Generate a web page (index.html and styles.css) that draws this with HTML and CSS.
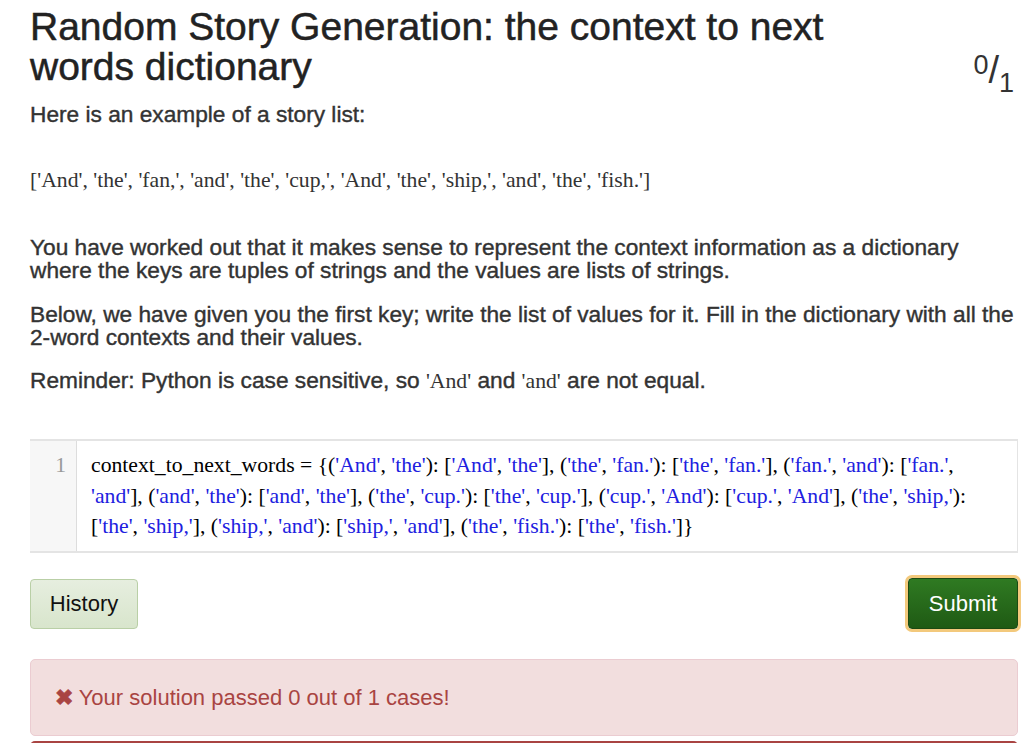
FILE: index.html
```html
<!DOCTYPE html>
<html lang="en">
<head>
  <meta charset="UTF-8">
  <title>Random Story Generation</title>
  <link rel="stylesheet" href="styles.css">
</head>
<body>
  <div class="page">
    <div class="problem-head">
      <h1 class="problem-title">Random Story Generation: the context to next words dictionary</h1>
      <div class="score"><sup>0</sup>/<sub>1</sub></div>
    </div>
    <p class="lead">Here is an example of a story list:</p>
    <pre class="story">['And', 'the', 'fan,', 'and', 'the', 'cup,', 'And', 'the', 'ship,', 'and', 'the', 'fish.']</pre>
    <p class="text">You have worked out that it makes sense to represent the context information as a dictionary where the keys are tuples of strings and the values are lists of strings.</p>
    <p class="text">Below, we have given you the first key; write the list of values for it. Fill in the dictionary with all the 2-word contexts and their values.</p>
    <p class="text">Reminder: Python is case sensitive, so <span class="serif">'And'</span> and <span class="serif">'and'</span> are not equal.</p>

    <div class="editor">
      <div class="gutter">1</div>
      <div class="code">context_to_next_words = {(<span class="s">'And'</span>, <span class="s">'the'</span>): [<span class="s">'And'</span>, <span class="s">'the'</span>], (<span class="s">'the'</span>, <span class="s">'fan.'</span>): [<span class="s">'the'</span>, <span class="s">'fan.'</span>], (<span class="s">'fan.'</span>, <span class="s">'and'</span>): [<span class="s">'fan.'</span>, <span class="s">'and'</span>], (<span class="s">'and'</span>, <span class="s">'the'</span>): [<span class="s">'and'</span>, <span class="s">'the'</span>], (<span class="s">'the'</span>, <span class="s">'cup.'</span>): [<span class="s">'the'</span>, <span class="s">'cup.'</span>], (<span class="s">'cup.'</span>, <span class="s">'And'</span>): [<span class="s">'cup.'</span>, <span class="s">'And'</span>], (<span class="s">'the'</span>, <span class="s">'ship,'</span>): [<span class="s">'the'</span>, <span class="s">'ship,'</span>], (<span class="s">'ship,'</span>, <span class="s">'and'</span>): [<span class="s">'ship,'</span>, <span class="s">'and'</span>], (<span class="s">'the'</span>, <span class="s">'fish.'</span>): [<span class="s">'the'</span>, <span class="s">'fish.'</span>]}</div>
    </div>

    <div class="actions">
      <button class="btn btn-history">History</button>
      <button class="btn btn-submit">Submit</button>
    </div>

    <div class="alert">
      <span class="alert-icon">&#10006;</span> Your solution passed 0 out of 1 cases!
    </div>
    <div class="next-bar"></div>
  </div>
</body>
</html>
```

FILE: styles.css
```css
* {
  margin: 0;
  padding: 0;
  box-sizing: border-box;
}
body {
  background: #fff;
  color: #333;
  font-family: "Liberation Sans", Arial, sans-serif;
  font-size: 22.7px;
  overflow: hidden;
}
.page {
  padding: 7px 6px 0 30px;
}
.problem-head {
  display: flex;
  justify-content: space-between;
  align-items: flex-start;
}
.problem-title {
  width: 850px;
  font-size: 39px;
  font-weight: normal;
  line-height: 40px;
  color: #222;
  -webkit-text-stroke: 0.5px #222;
}
.score {
  margin-top: 38px;
  margin-right: 4px;
  font-size: 38px;
  color: #333;
  line-height: 40px;
}
.score sup, .score sub {
  font-size: 27px;
}
.score sup {
  vertical-align: 9px;
}
.score sub {
  vertical-align: -9px;
}
.lead, .text {
  line-height: 23px;
  -webkit-text-stroke: 0.4px #333;
}
.story {
  margin-top: 43px;
  font-family: "Liberation Serif", "Times New Roman", serif;
  font-size: 21.7px;
  line-height: 23px;
  color: #333;
}
.text {
  margin-top: 44px;
}
.text + .text {
  margin-top: 20.5px;
}
.serif {
  font-family: "Liberation Serif", "Times New Roman", serif;
  font-size: 21.7px;
  -webkit-text-stroke: 0;
}
.editor {
  display: flex;
  margin-top: 46px;
  border: 2px solid #e4e4e4;
  border-right-width: 1px;
  border-left: 0;
  height: 114px;
}
.gutter {
  width: 47px;
  background: #f7f7f7;
  border-right: 1px solid #ddd;
  color: #999;
  text-align: right;
  padding: 9px 10px 0 0;
  font-family: "Liberation Serif", "Times New Roman", serif;
  font-size: 21.7px;
  line-height: 30.5px;
}
.code {
  flex: 1;
  padding: 9px 8px 0 14px;
  font-family: "Liberation Serif", "Times New Roman", serif;
  font-size: 21.7px;
  line-height: 30.5px;
  color: #000;
}
.code .s {
  color: #2020e0;
}
.actions {
  display: flex;
  justify-content: space-between;
  align-items: center;
  margin-top: 25px;
}
.btn {
  font-family: "Liberation Sans", Arial, sans-serif;
  font-size: 22px;
  border-radius: 4px;
  cursor: pointer;
}
.btn-history {
  width: 108px;
  height: 50px;
  color: #111;
  background: linear-gradient(#e6eedf, #d8e5cc);
  border: 1px solid #b9cfa6;
}
.btn-submit {
  width: 110px;
  height: 51px;
  color: #fff;
  background: linear-gradient(#2f7a22, #1f5a14);
  border: 1px solid #1c4a12;
  box-shadow: 0 0 0 3px #f3c97c;
}
.alert {
  margin-top: 30px;
  height: 77px;
  padding: 26px 0 0 24px;
  background: #f2dede;
  border: 1px solid #ebccd1;
  border-radius: 5px;
  color: #a94442;
  font-size: 22px;
  line-height: 23px;
}
.alert-icon {
  font-size: 22px;
  -webkit-text-stroke: 1px #a94442;
}
.next-bar {
  margin-top: 5px;
  height: 20px;
  border-top: 2px solid #a94442;
  border-radius: 5px 5px 0 0;
  background: #f2dede;
}
```
